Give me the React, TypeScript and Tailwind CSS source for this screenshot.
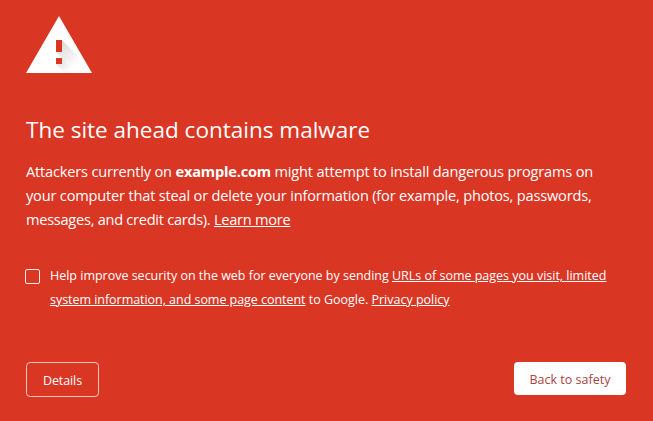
export default function App() {
  return (
    <main className="h-[421px] w-[653px] overflow-hidden bg-[#d93624] pl-[26px] pt-4 text-white font-['Open_Sans','Noto_Sans',sans-serif]">
      <svg className="block h-[57px] w-[66px]" viewBox="0 0 66 57">
        <defs>
          <linearGradient id="shade" gradientUnits="userSpaceOnUse" x1="32" y1="32" x2="50" y2="50">
            <stop offset="0" stopColor="#dddddd" />
            <stop offset="1" stopColor="#fff" />
          </linearGradient>
          <linearGradient id="dotShade" gradientUnits="userSpaceOnUse" x1="32" y1="44" x2="43" y2="55">
            <stop offset="0" stopColor="#dddddd" />
            <stop offset="1" stopColor="#fff" />
          </linearGradient>
        </defs>
        <path fill="#fff" d="M33 0L66 57H0Z" />
        <path fill="url(#shade)" d="M36 24L55 43V57H51L30 36Z" />
        <path fill="url(#dotShade)" d="M36 42L51 57H39L30 48Z" />
        <path fill="#d93624" d="M30 24h6v12h-6zM30 42h6v6h-6z" />
      </svg>
      <h1 className="mt-[41px] h-8 whitespace-nowrap text-[22.5px] leading-8">The site ahead contains malware</h1>
      <p className="mt-[13px] whitespace-nowrap text-[14.6px] leading-6 tracking-[-0.19px]">
        <span className="block">Attackers currently on <b>example.com</b> might attempt to install dangerous programs on</span>
        <span className="block">your computer that steal or delete your information (for example, photos, passwords,</span>
        <span className="block tracking-[-0.27px]">messages, and credit cards). <a className="underline">Learn more</a></span>
      </p>
      <div className="mt-[33px] flex whitespace-nowrap text-[12.5px] leading-6">
        <span className="-ml-px mr-[10px] mt-[5px] size-[15px] rounded-[2px] border border-white/90" />
        <p className="tracking-[-0.01px]">
          <span className="block">Help improve security on the web for everyone by sending <a className="underline">URLs of some pages you visit, limited</a></span>
          <span className="block"><a className="tracking-[-0.04px] underline">system information, and some page content</a> to Google. <a className="underline">Privacy policy</a></span>
        </p>
      </div>
      <div className="mt-[50px] flex w-[600px] items-start justify-between text-[12.5px]">
        <button className="h-[35px] w-[73px] rounded border border-white/70 pt-[3px] tracking-[-0.1px]">Details</button>
        <button className="h-[33px] w-[112px] rounded bg-white pt-[3px] text-[#a94442]">Back to safety</button>
      </div>
    </main>
  );
}
